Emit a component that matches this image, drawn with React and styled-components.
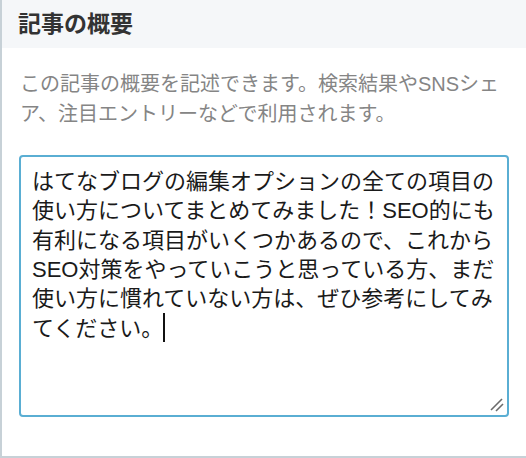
import React from "react";
import styled, { createGlobalStyle } from "styled-components";

const GlobalStyle = createGlobalStyle`
  html, body {
    margin: 0;
    padding: 0;
    background: #ffffff;
  }
  body {
    font-family: "Liberation Sans", "Noto Sans CJK JP", sans-serif;
  }
`;

const Panel = styled.section`
  box-sizing: border-box;
  width: 526px;
  height: 458px;
  border-left: 2px solid #c7d1d7;
  border-bottom: 2px solid #c7d1d7;
  background: #ffffff;
  display: flex;
  flex-direction: column;
`;

const Header = styled.header`
  height: 48px;
  flex: none;
  background: #f5f7f9;
  display: flex;
  align-items: center;
  padding: 0 0 0 16px;
`;

const Title = styled.h2`
  margin: 0;
  font-family: "Liberation Sans", "Noto Sans CJK JP", sans-serif;
  font-size: 23px;
  font-weight: 700;
  color: #333333;
  line-height: 1;
`;

const Body = styled.div`
  flex: 1;
  display: flex;
  flex-direction: column;
  padding: 21px 16px 0 17px;
`;

const Description = styled.p`
  margin: 0 0 26px 1px;
  font-size: 20px;
  line-height: 30px;
  color: #858585;
`;

const TextBox = styled.div`
  position: relative;
  box-sizing: border-box;
  width: 490px;
  height: 262px;
  border: 2px solid #5aaed3;
  border-radius: 4px;
  padding: 10px 8px 10px 11px;
  font-size: 22px;
  line-height: 29.3px;
  color: #1a1a1a;
  white-space: pre;
  background: #ffffff;
`;

const Caret = styled.span`
  display: inline-block;
  width: 2px;
  height: 29px;
  margin-left: 0;
  background: #111111;
  vertical-align: -6px;
`;

const Grip = styled.svg`
  position: absolute;
  right: 3px;
  bottom: 3px;
  width: 14px;
  height: 14px;
`;

const lines = [
  "はてなブログの編集オプションの全ての項目の",
  "使い方についてまとめてみました！SEO的にも",
  "有利になる項目がいくつかあるので、これから",
  "SEO対策をやっていこうと思っている方、まだ",
  "使い方に慣れていない方は、ぜひ参考にしてみ",
  "てください。",
];

export default function App() {
  return (
    <>
      <GlobalStyle />
      <Panel>
        <Header>
          <Title>記事の概要</Title>
        </Header>
        <Body>
          <Description>
            この記事の概要を記述できます。検索結果やSNSシェ
            <br />
            ア、注目エントリーなどで利用されます。
          </Description>
          <TextBox role="textbox" aria-multiline="true">
            {lines.join("\n")}
            <Caret />
            <Grip viewBox="0 0 14 14">
              <line x1="1" y1="12" x2="12" y2="1" stroke="#6b6b6b" strokeWidth="1.6" />
              <line x1="6" y1="13" x2="13" y2="6" stroke="#6b6b6b" strokeWidth="1.6" />
            </Grip>
          </TextBox>
        </Body>
      </Panel>
    </>
  );
}
